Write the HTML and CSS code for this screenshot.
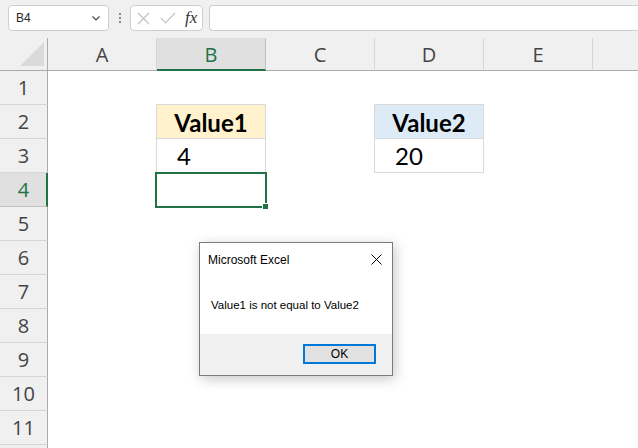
FILE: index.html
```html
<!DOCTYPE html>
<html>
<head>
<meta charset="utf-8">
<link rel="stylesheet" href="styles.css">
</head>
<body>
<div class="app">
  <div class="topbar">
    <div class="namebox">
      <span class="nb-text">B4</span>
      <svg class="chev" width="8" height="5" viewBox="0 0 8 5"><path d="M0.5 0.5 L4 4 L7.5 0.5" fill="none" stroke="#444" stroke-width="1.1"/></svg>
    </div>
    <div class="grip"><i></i><i></i><i></i></div>
    <div class="fbtns">
      <svg class="ico" width="13" height="13" viewBox="0 0 13 13"><path d="M1 1 L12 12 M12 1 L1 12" stroke="#c3c3c3" stroke-width="1.2" fill="none"/></svg>
      <svg class="ico" width="16" height="12" viewBox="0 0 16 12"><path d="M1 6 L5.5 10.8 L15 1" stroke="#c3c3c3" stroke-width="1.2" fill="none"/></svg>
      <span class="fx">fx</span>
    </div>
    <div class="finput"></div>
  </div>

  <div class="sheet">
    <div class="corner"><div class="tri"></div></div>
    <div class="ch">A</div><div class="ch sel">B</div><div class="ch">C</div><div class="ch">D</div><div class="ch">E</div><div class="ch"></div>

    <div class="rh">1</div><div class="c"></div><div class="c"></div><div class="c"></div><div class="c"></div><div class="c"></div><div class="c"></div>
    <div class="rh">2</div><div class="c"></div><div class="c th yellow">Value1</div><div class="c"></div><div class="c th blue">Value2</div><div class="c"></div><div class="c"></div>
    <div class="rh">3</div><div class="c"></div><div class="c td">4</div><div class="c"></div><div class="c td">20</div><div class="c"></div><div class="c"></div>
    <div class="rh sel">4</div><div class="c"></div><div class="c active"><div class="selbox"></div><div class="handle"></div></div><div class="c"></div><div class="c"></div><div class="c"></div><div class="c"></div>
    <div class="rh">5</div><div class="c"></div><div class="c"></div><div class="c"></div><div class="c"></div><div class="c"></div><div class="c"></div>
    <div class="rh">6</div><div class="c"></div><div class="c"></div><div class="c"></div><div class="c"></div><div class="c"></div><div class="c"></div>
    <div class="rh">7</div><div class="c"></div><div class="c"></div><div class="c"></div><div class="c"></div><div class="c"></div><div class="c"></div>
    <div class="rh">8</div><div class="c"></div><div class="c"></div><div class="c"></div><div class="c"></div><div class="c"></div><div class="c"></div>
    <div class="rh">9</div><div class="c"></div><div class="c"></div><div class="c"></div><div class="c"></div><div class="c"></div><div class="c"></div>
    <div class="rh">10</div><div class="c"></div><div class="c"></div><div class="c"></div><div class="c"></div><div class="c"></div><div class="c"></div>
    <div class="rh">11</div><div class="c"></div><div class="c"></div><div class="c"></div><div class="c"></div><div class="c"></div><div class="c"></div>
    <div class="rh"></div><div class="c"></div><div class="c"></div><div class="c"></div><div class="c"></div><div class="c"></div><div class="c"></div>
  </div>

  <div class="dialog">
    <div class="dlg-title">
      <span>Microsoft Excel</span>
      <svg class="close" width="11" height="11" viewBox="0 0 11 11"><path d="M0.5 0.5 L10.5 10.5 M10.5 0.5 L0.5 10.5" stroke="#000" stroke-width="1" fill="none"/></svg>
    </div>
    <div class="dlg-body">Value1 is not equal to Value2</div>
    <div class="dlg-foot"><div class="okbtn">OK</div></div>
  </div>
</div>
</body>
</html>
```

FILE: styles.css
```css
* { box-sizing: border-box; }
html, body { margin: 0; padding: 0; }
body { background: #ffffff; }

.app {
  position: relative;
  width: 638px;
  height: 448px;
  overflow: hidden;
  background: #f0f0f0;
  font-family: "Segoe UI", "Open Sans", "Liberation Sans", sans-serif;
}

/* ---------- formula bar ---------- */
.topbar {
  height: 38px;
  display: flex;
  align-items: flex-start;
  padding: 5px 0 0 8px;
}
.namebox {
  width: 101px;
  height: 26px;
  background: #fff;
  border: 1px solid #cfcfcf;
  border-radius: 4px;
  display: flex;
  align-items: center;
  justify-content: space-between;
  padding: 0 8px 0 7px;
}
.nb-text {
  font-size: 12px;
  color: #262626;
  font-family: "Segoe UI", "Liberation Sans", sans-serif;
}
.chev { margin-top: 1px; }
.grip {
  width: 21px;
  height: 26px;
  display: flex;
  flex-direction: column;
  align-items: center;
  justify-content: center;
  gap: 2px;
}
.grip i {
  display: block;
  width: 2px;
  height: 2px;
  background: #8a8a8a;
}
.fbtns {
  width: 73px;
  height: 26px;
  background: #fff;
  border: 1px solid #cfcfcf;
  border-radius: 4px;
  display: flex;
  align-items: center;
  padding: 0 0 0 6px;
  gap: 10px;
}
.fbtns .ico { flex: none; }
.fx {
  font-family: "Liberation Serif", "DejaVu Serif", serif;
  font-style: italic;
  font-size: 17px;
  color: #333;
  margin-left: -1px;
  line-height: 1;
  margin-top: -2px;
}
.finput {
  flex: 1;
  height: 26px;
  margin-left: 6px;
  background: #fff;
  border: 1px solid #cfcfcf;
  border-right: none;
  border-radius: 4px 0 0 4px;
}

/* ---------- sheet grid ---------- */
.sheet {
  display: grid;
  grid-template-columns: 48px repeat(6, 109px);
  grid-template-rows: 33px repeat(12, 34px);
  background: #fff;
}
.corner {
  background: #f0f0f0;
  border-right: 1px solid #ababab;
  border-bottom: 1px solid #ababab;
  position: relative;
}
.tri {
  position: absolute;
  left: 20px;
  top: 4px;
  width: 0;
  height: 0;
  border-style: solid;
  border-width: 0 0 24px 24px;
  border-color: transparent transparent #dadada transparent;
}
.ch {
  background: #f0f0f0;
  border-right: 1px solid #d6d6d6;
  border-bottom: 1px solid #ababab;
  display: flex;
  align-items: center;
  justify-content: center;
  font-size: 20px;
  color: #444;
  padding-top: 1px;
}
.ch.sel {
  background: #e0e0e0;
  border-right-color: #c2c2c2;
  border-bottom: 2px solid #217346;
  color: #217346;
  padding-top: 2px;
}
.rh {
  background: #f0f0f0;
  border-right: 1px solid #ababab;
  border-bottom: 1px solid #d6d6d6;
  display: flex;
  align-items: center;
  justify-content: center;
  font-size: 20px;
  color: #444;
}
.rh.sel {
  background: #e0e0e0;
  border-right: 2px solid #217346;
  border-bottom-color: #c2c2c2;
  color: #217346;
  padding-left: 1px;
}
.c {
  background: #fff;
  position: relative;
  min-width: 0;
}
.th {
  margin: -1px 0 0 -1px;
  border: 1px solid #d9d9d9;
  display: flex;
  align-items: center;
  justify-content: center;
  font-family: "Lato", "Liberation Sans", sans-serif;
  font-weight: 700;
  font-size: 24px;
  color: #000;
  padding-top: 1px;
}
.yellow { background: #fff2cc; }
.blue { background: #ddebf7; }
.td {
  margin-left: -1px;
  border: 1px solid #d9d9d9;
  border-top: none;
  display: flex;
  align-items: center;
  padding-left: 20px;
  font-family: "Lato", "Liberation Sans", sans-serif;
  font-size: 24px;
  color: #000;
}
.active { z-index: 2; }
.selbox {
  position: absolute;
  top: -1px;
  right: -1px;
  bottom: -1px;
  left: -2px;
  border: 2px solid #217346;
}
.handle {
  position: absolute;
  right: -3px;
  bottom: -3px;
  width: 7px;
  height: 7px;
  background: #217346;
  border: 1px solid #fff;
}

/* ---------- message box ---------- */
.dialog {
  position: absolute;
  z-index: 10;
  left: 199px;
  top: 242px;
  width: 194px;
  height: 134px;
  background: #fff;
  border: 1px solid #7a7a7a;
  box-shadow: 2px 3px 12px rgba(0, 0, 0, 0.22);
  display: flex;
  flex-direction: column;
  font-family: "Segoe UI", "Liberation Sans", sans-serif;
  color: #000;
}
.dlg-title {
  height: 32px;
  display: flex;
  align-items: center;
  justify-content: space-between;
  padding: 0 10px 0 8px;
  font-size: 12px;
}
.dlg-title span { margin-top: 1px; }
.dlg-body {
  flex: 1;
  display: flex;
  align-items: center;
  padding: 0 0 0 11px;
  font-size: 11.5px;
}
.dlg-foot {
  height: 41px;
  background: #f0f0f0;
  display: flex;
  justify-content: flex-end;
  align-items: flex-start;
  padding: 10px 16px 0 0;
}
.okbtn {
  width: 73px;
  height: 20px;
  background: #e1e1e1;
  border: 2px solid #0078d7;
  display: flex;
  align-items: center;
  justify-content: center;
  font-size: 12px;
}
```
